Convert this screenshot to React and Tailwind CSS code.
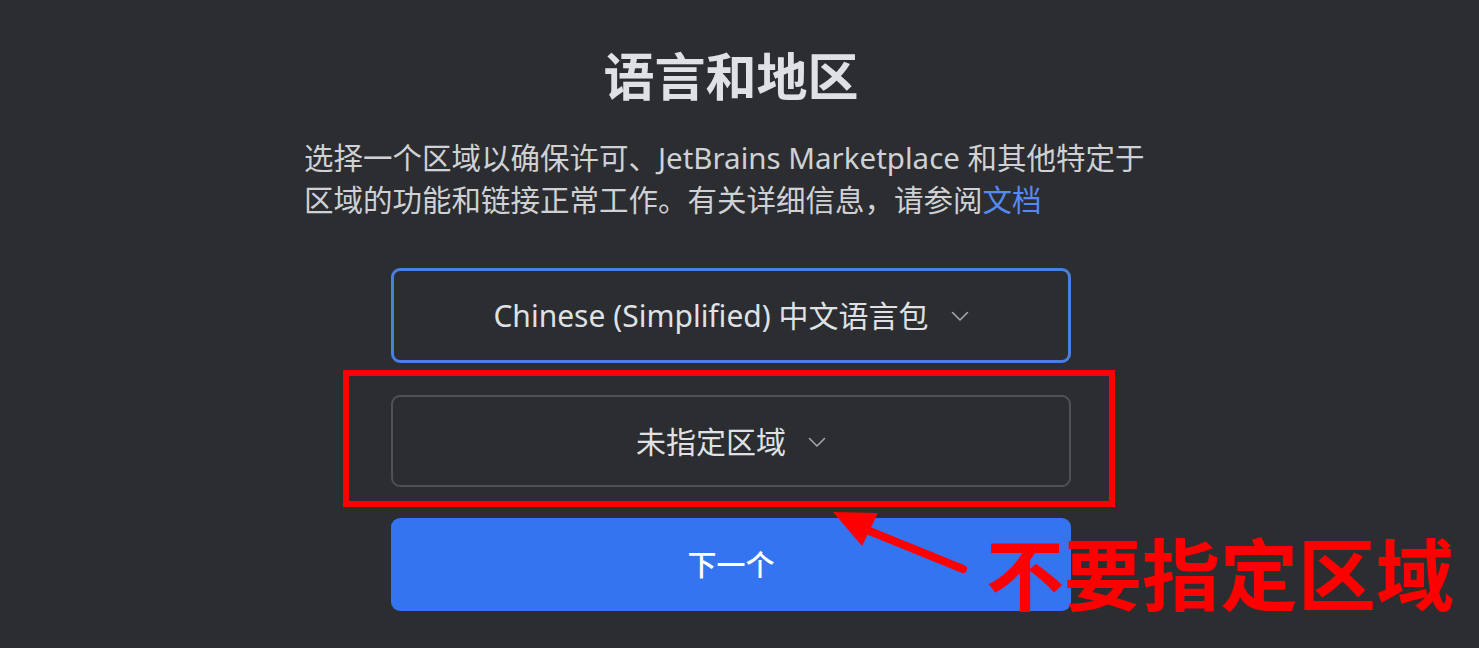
const font = { fontFamily: '"Noto Sans", "Noto Sans CJK SC", sans-serif' };

const Chevron = () => (
    <svg width="18" height="11" viewBox="0 0 18 11" fill="none" className="mt-[2px]">
        <path d="M1.5 1.5 L9 9 L16.5 1.5" stroke="#a3a6ab" strokeWidth="1.6" strokeLinecap="round" strokeLinejoin="round" />
    </svg>
);

const SelectBox = ({ label, active }) => (
    <div
        className={`w-[680px] rounded-[9px] flex items-center justify-center gap-[22px] bg-[#2b2d30] ${
            active ? "h-[95px] border-[3px] border-[#4a7ee0]" : "h-[92px] border-2 border-[#4e5157]"
        }`}
    >
        <span className="text-[30px] text-[#dfe1e5]">{label}</span>
        <Chevron />
    </div>
);

export default function App() {
    return (
        <div className="relative w-full h-[648px] bg-[#2b2d30] overflow-hidden" style={font}>
            <div className="flex flex-col items-center pr-[17px] pt-[45px]">
                <h1 className="text-[51px] leading-[62px] font-bold text-[#dfe1e5]">语言和地区</h1>
                <p className="w-[854px] mt-[30px] text-[29.5px] leading-[42px] text-[#cfd1d5]">
                    <span className="block whitespace-nowrap">
                        选择一个区域以确保许可、JetBrains Marketplace 和其他特定于
                    </span>
                    <span className="block whitespace-nowrap">
                        区域的功能和链接正常工作。有关详细信息，请参阅
                        <span className="text-[#548af7]">文档</span>
                    </span>
                </p>
                <div className="mt-[47px] flex flex-col gap-[32px]">
                    <SelectBox label="Chinese (Simplified) 中文语言包" active />
                    <SelectBox label="未指定区域" />
                    <button className="w-[680px] h-[93px] -mt-[1px] rounded-[9px] bg-[#3574f0] text-white text-[29px] font-medium">
                        下一个
                    </button>
                </div>
            </div>

            {/* annotation overlay */}
            <div className="absolute left-[343px] top-[370px] w-[772px] h-[137px] border-[6px] border-[#ff0000]" />
            <svg className="absolute left-0 top-0" width="1479" height="648" viewBox="0 0 1479 648">
                <line x1="963" y1="569" x2="862" y2="528" stroke="#ff0000" strokeWidth="8" strokeLinecap="round" />
                <polygon points="833,512 878,513 862,546" fill="#ff0000" />
            </svg>
            <div className="absolute left-[986px] top-[527px] text-[78px] leading-[96px] font-bold text-[#ff0000] whitespace-nowrap">
                不要指定区域
            </div>
        </div>
    );
}
